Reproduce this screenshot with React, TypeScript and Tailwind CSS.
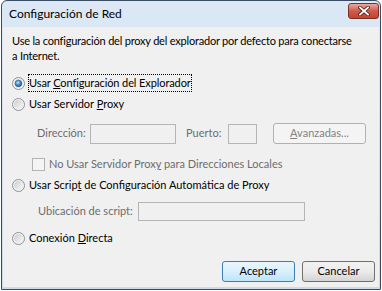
import * as React from "react"

function Radio({ checked = false }: { checked?: boolean }) {
  return (
    <svg width="13" height="13" viewBox="0 0 13 13" className="shrink-0">
      <defs>
        <linearGradient id="rbg" x1="0" y1="0" x2="1" y2="1">
          <stop offset="0" stopColor="#cdcdcd" />
          <stop offset="1" stopColor="#f8f8f8" />
        </linearGradient>
        <radialGradient id="rdot" cx="0.4" cy="0.35" r="0.7">
          <stop offset="0" stopColor="#b7e2fb" />
          <stop offset="0.55" stopColor="#3f8ad4" />
          <stop offset="1" stopColor="#1b4f94" />
        </radialGradient>
      </defs>
      <circle cx="6.5" cy="6.5" r="6" fill="#f4f4f4" stroke="#8e9294" />
      <circle cx="6.5" cy="6.5" r="4.5" fill="url(#rbg)" />
      {checked && <circle cx="6.5" cy="6.5" r="3.3" fill="url(#rdot)" stroke="#1e4f86" strokeWidth="0.6" />}
    </svg>
  )
}

function Check() {
  return <div className="w-[13px] h-[13px] shrink-0 border border-[#b1b3b5] bg-[#f4f4f4]" />
}

function WinButton({ label, primary = false }: { label: React.ReactNode; primary?: boolean }) {
  return (
    <div
      className={`w-[73px] h-[21px] rounded-[3px] border flex items-center justify-center ${
        primary
          ? "border-[#3c7fb1] bg-gradient-to-b from-[#eaf6fd] via-[#d9f0fc] to-[#bce4f9]"
          : "border-[#707070] bg-gradient-to-b from-[#f2f2f2] via-[#ebebeb] to-[#d3d3d3]"
      }`}
    >
      {label}
    </div>
  )
}

function CloseButton() {
  return (
    <div className="w-[31px] h-[16px] rounded-[3px] border border-[#7b3027] bg-gradient-to-b from-[#e9a99e] via-[#cf5b4b] to-[#c54331] flex items-center justify-center">
      <svg width="12" height="10" viewBox="0 0 12 10">
        <path d="M2 1.5 L10 8.5 M10 1.5 L2 8.5" stroke="#5b211a" strokeWidth="3.6" strokeLinecap="square" />
        <path d="M2 1.5 L10 8.5 M10 1.5 L2 8.5" stroke="#ffffff" strokeWidth="1.8" strokeLinecap="square" />
      </svg>
    </div>
  )
}

export default function App() {
  return (
    <div className="w-[382px] h-[291px] bg-white font-['Lato','Liberation_Sans',sans-serif] text-[11px] text-black">
      <div className="ml-[1px] w-[380px] h-[290px] rounded-t-[6px] border border-[#3a4c63] bg-gradient-to-b from-[#dce8f5] to-[#c9daee] flex flex-col">
        {/* title bar */}
        <div className="h-[26px] flex items-start justify-between pl-[7px] pr-[1px]">
          <span className="mt-[5px] text-[12px] leading-[16px] text-black">Configuración de Red</span>
          <div className="mt-[2px]">
            <CloseButton />
          </div>
        </div>

        {/* client area */}
        <div className="flex-1 ml-[1px] mr-[1px] mb-[2px] bg-[#f0f0f0] flex flex-col whitespace-nowrap">
          <div className="pl-[9px] pt-[6px] leading-[15px] tracking-[-0.2px]">
            Use la configuración del proxy del explorador por defecto para conectarse
            <br />
            a Internet.
          </div>

          <div className="mt-[11px] h-[18px] flex items-center pl-[9px]">
            <Radio checked />
            <span className="ml-[3px] h-[18px] leading-[16px] border border-dotted border-black tracking-[-0.1px]">
              Usar <span className="underline">C</span>onfiguración del Explorador
            </span>
          </div>

          <div className="mt-[3px] h-[18px] flex items-center pl-[9px]">
            <Radio />
            <span className="ml-[4px]">
              Usar Servidor <span className="underline">P</span>roxy
            </span>
          </div>

          <div className="mt-[10px] h-[21px] flex items-center pl-[34px] text-[#6d6d6d]">
            <span className="w-[53px]">Dirección:</span>
            <div className="w-[86px] h-[20px] border border-[#b5b5b5] bg-[#f0f0f0]" />
            <span className="ml-[10px] w-[42px]">Puerto:</span>
            <div className="w-[29px] h-[20px] border border-[#b5b5b5] bg-[#f0f0f0]" />
            <div className="ml-[16px] w-[93px] h-[21px] rounded-[3px] border border-[#adb2b5] bg-[#f4f4f4] flex items-center justify-center text-[#838383]">
              <span>
                <span className="underline">A</span>vanzadas...
              </span>
            </div>
          </div>

          <div className="mt-[12px] h-[16px] flex items-center pl-[29px] text-[#6d6d6d]">
            <Check />
            <span className="ml-[4px]">
              No Usar Servidor Prox<span className="underline">y</span> para Direcciones Locales
            </span>
          </div>

          <div className="mt-[4px] h-[18px] flex items-center pl-[9px]">
            <Radio />
            <span className="ml-[4px]">
              Usar Scrip<span className="underline">t</span> de Configuración Automática de Proxy
            </span>
          </div>

          <div className="mt-[7px] h-[20px] flex items-center pl-[35px] text-[#6d6d6d]">
            <span className="w-[100px]">Ubicación de script:</span>
            <div className="w-[167px] h-[19px] border border-[#b5b5b5] bg-[#f0f0f0]" />
          </div>

          <div className="mt-[8px] h-[18px] flex items-center pl-[9px]">
            <Radio />
            <span className="ml-[4px]">
              Conexión <span className="underline">D</span>irecta
            </span>
          </div>

          <div className="mt-[14px] flex justify-end gap-[7px] pr-[4px]">
            <WinButton primary label="Aceptar" />
            <WinButton label="Cancelar" />
          </div>
        </div>
      </div>
    </div>
  )
}
